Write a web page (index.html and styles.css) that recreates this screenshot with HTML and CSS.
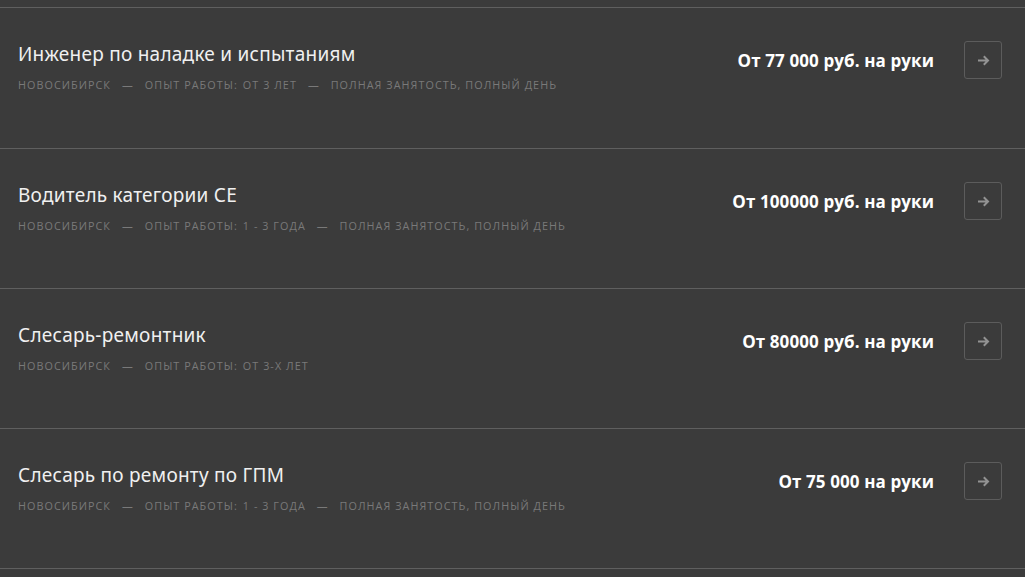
FILE: index.html
```html
<!DOCTYPE html>
<html lang="ru">
<head>
<meta charset="utf-8">
<link rel="stylesheet" href="styles.css">
</head>
<body>
<div class="list">
  <div class="row">
    <div class="info">
      <div class="title">Инженер по наладке и испытаниям</div>
      <div class="meta"><span>Новосибирск</span><span class="dash">—</span><span>Опыт работы:<span class="gap"></span>от 3 лет</span><span class="dash">—</span><span>Полная занятость, полный день</span></div>
    </div>
    <div class="side">
      <div class="salary">От 77 000 руб. на руки</div>
      <a class="btn" href="#"><svg width="13" height="11" viewBox="0 0 13 11"><path d="M1 5.5h10M6.8 1.3 11 5.5 6.8 9.7" fill="none" stroke="#939393" stroke-width="2"/></svg></a>
    </div>
  </div>
  <div class="row">
    <div class="info">
      <div class="title">Водитель категории СЕ</div>
      <div class="meta"><span>Новосибирск</span><span class="dash">—</span><span>Опыт работы:<span class="gap"></span>1 - 3 года</span><span class="dash">—</span><span>Полная занятость, полный день</span></div>
    </div>
    <div class="side">
      <div class="salary">От 100000 руб. на руки</div>
      <a class="btn" href="#"><svg width="13" height="11" viewBox="0 0 13 11"><path d="M1 5.5h10M6.8 1.3 11 5.5 6.8 9.7" fill="none" stroke="#939393" stroke-width="2"/></svg></a>
    </div>
  </div>
  <div class="row">
    <div class="info">
      <div class="title">Слесарь-ремонтник</div>
      <div class="meta"><span>Новосибирск</span><span class="dash">—</span><span>Опыт работы:<span class="gap"></span>от 3-х лет</span></div>
    </div>
    <div class="side">
      <div class="salary">От 80000 руб. на руки</div>
      <a class="btn" href="#"><svg width="13" height="11" viewBox="0 0 13 11"><path d="M1 5.5h10M6.8 1.3 11 5.5 6.8 9.7" fill="none" stroke="#939393" stroke-width="2"/></svg></a>
    </div>
  </div>
  <div class="row">
    <div class="info">
      <div class="title">Слесарь по ремонту по ГПМ</div>
      <div class="meta"><span>Новосибирск</span><span class="dash">—</span><span>Опыт работы:<span class="gap"></span>1 - 3 года</span><span class="dash">—</span><span>Полная занятость, полный день</span></div>
    </div>
    <div class="side">
      <div class="salary">От 75 000 на руки</div>
      <a class="btn" href="#"><svg width="13" height="11" viewBox="0 0 13 11"><path d="M1 5.5h10M6.8 1.3 11 5.5 6.8 9.7" fill="none" stroke="#939393" stroke-width="2"/></svg></a>
    </div>
  </div>
</div>
</body>
</html>
```
FILE: styles.css
```css
html, body {
  margin: 0;
  padding: 0;
  background: #3b3b3b;
}
body {
  font-family: "Open Sans", "Liberation Sans", sans-serif;
  padding-top: 7px;
  height: 570px;
  overflow: hidden;
}
.list {
  border-bottom: 1px solid #5f5f5f;
}
.row {
  display: flex;
  justify-content: space-between;
  align-items: flex-start;
  height: 139px;
  border-top: 1px solid #5f5f5f;
  padding: 0 23px 0 18px;
}
.row:first-child {
  height: 140px;
}
.info {
  padding-top: 34px;
}
.title {
  font-family: "Noto Sans", sans-serif;
  font-size: 19px;
  line-height: 24px;
  color: #f0f0f0;
  letter-spacing: 0.25px;
}
.meta {
  margin-top: 12px;
  font-size: 10.8px;
  line-height: 14px;
  color: #797979;
  text-transform: uppercase;
  letter-spacing: 1.05px;
  display: flex;
}
.dash {
  margin: 0 12px 0 11px;
  letter-spacing: 0;
}
.gap {
  display: inline-block;
  width: 5px;
}
.side {
  display: flex;
  align-items: center;
  margin-top: 33px;
  gap: 30px;
}
.salary {
  font-size: 17px;
  font-weight: 700;
  color: #fff;
  letter-spacing: 0.1px;
}
.btn {
  width: 36px;
  height: 36px;
  border: 1px solid #5c5c5c;
  border-radius: 3px;
  display: flex;
  align-items: center;
  justify-content: center;
}
```
